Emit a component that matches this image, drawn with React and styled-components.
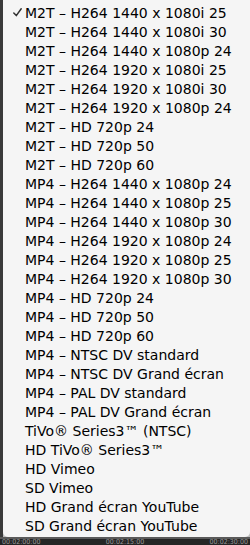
import React from "react";
import styled, { createGlobalStyle } from "styled-components";

const presets = [
  "M2T – H264 1440 x 1080i 25",
  "M2T – H264 1440 x 1080i 30",
  "M2T – H264 1440 x 1080p 24",
  "M2T – H264 1920 x 1080i 25",
  "M2T – H264 1920 x 1080i 30",
  "M2T – H264 1920 x 1080p 24",
  "M2T – HD 720p 24",
  "M2T – HD 720p 50",
  "M2T – HD 720p 60",
  "MP4 – H264 1440 x 1080p 24",
  "MP4 – H264 1440 x 1080p 25",
  "MP4 – H264 1440 x 1080p 30",
  "MP4 – H264 1920 x 1080p 24",
  "MP4 – H264 1920 x 1080p 25",
  "MP4 – H264 1920 x 1080p 30",
  "MP4 – HD 720p 24",
  "MP4 – HD 720p 50",
  "MP4 – HD 720p 60",
  "MP4 – NTSC DV standard",
  "MP4 – NTSC DV Grand écran",
  "MP4 – PAL DV standard",
  "MP4 – PAL DV Grand écran",
  "TiVo® Series3™ (NTSC)",
  "HD TiVo® Series3™",
  "HD Vimeo",
  "SD Vimeo",
  "HD Grand écran YouTube",
  "SD Grand écran YouTube",
];

const timecodes = ["00:02:00:00", "00:02:15:00", "00:02:30:00"];

const Check = () => (
  <svg width="9" height="9" viewBox="0 0 9 9">
    <path
      d="M0.8 5 L3.3 7.6 L8.2 0.8"
      fill="none"
      stroke="#333"
      strokeWidth="1.5"
      strokeLinecap="round"
      strokeLinejoin="round"
    />
  </svg>
);

const App = () => {
  return (
    <>
      <GlobalStyle />
      <Screen>
        <Body>
          <LeftEdge />
          <Menu>
            {presets.map((label, i) => (
              <Item key={label}>
                <Mark>{i === 0 && <Check />}</Mark>
                {label}
              </Item>
            ))}
          </Menu>
        </Body>
        <Timeline>
          {timecodes.map((t) => (
            <Timecode key={t}>{t}</Timecode>
          ))}
        </Timeline>
      </Screen>
    </>
  );
};

export default App;

const GlobalStyle = createGlobalStyle`
  html, body {
    margin: 0;
    padding: 0;
    background: #2b2b2b;
  }
`;

const Screen = styled.div`
  width: 250px;
  height: 545px;
  display: flex;
  flex-direction: column;
  overflow: hidden;
  background: #2b2b2b;
  font-family: "DejaVu Sans", "Liberation Sans", sans-serif;
`;

const Body = styled.div`
  display: flex;
  flex: 1;
  background: #bdbdbd;
`;

const LeftEdge = styled.div`
  width: 3px;
  background: #3a3a3a;
`;

const Menu = styled.div`
  flex: 1;
  display: flex;
  flex-direction: column;
  padding: 3px 0 2px;
  background: #f5f5f5;
  border-radius: 0 0 5px 5px;
`;

const Item = styled.div`
  display: flex;
  align-items: center;
  height: 19px;
  font-size: 14px;
  color: #000;
  white-space: nowrap;
`;

const Mark = styled.span`
  width: 22px;
  display: flex;
  justify-content: flex-end;
  padding-right: 3px;
  box-sizing: border-box;
`;

const Timeline = styled.div`
  height: 7px;
  display: flex;
  justify-content: space-between;
  align-items: center;
  padding: 0 2px;
  overflow: hidden;
  background: #252525;
  border-top: 2px solid #5a5a5a;
`;

const Timecode = styled.span`
  font-family: "DejaVu Sans Condensed", "DejaVu Sans", sans-serif;
  font-size: 7px;
  line-height: 7px;
  color: #9a9a9a;
`;
